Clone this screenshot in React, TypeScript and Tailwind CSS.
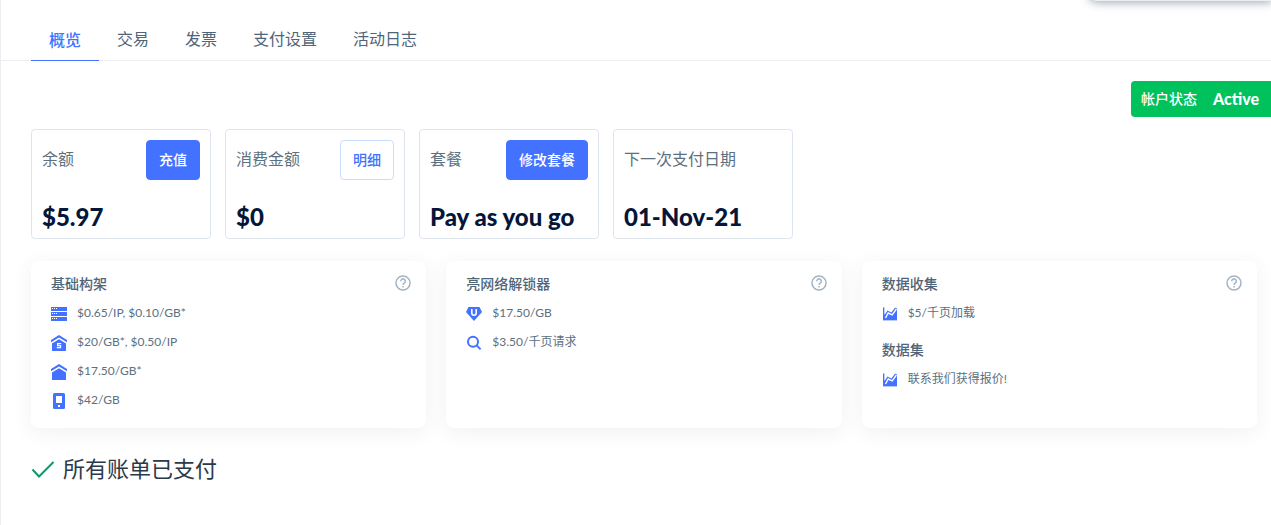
import type { ReactNode } from 'react';

const BLUE = '#4272ff';

function ServerIcon() {
  return (
    <svg viewBox="0 0 16 16" className="size-4 shrink-0" fill={BLUE} aria-hidden="true">
      {[1, 6, 11].map((y) => (
        <g key={y}>
          <rect x="0" y={y} width="16" height="4" />
          <path d={`M1 ${y + 1}h1v1h-1zM3 ${y + 1}h1v1h-1zM5 ${y + 1}h1v1h-1z`} fill="#fff" />
        </g>
      ))}
    </svg>
  );
}

function HouseIcon({ marked = false }: { marked?: boolean }) {
  return (
    <svg viewBox="0 0 16 16" className="size-4 shrink-0" fill={BLUE} aria-hidden="true">
      <path d="M8 0 16 5V7.2L8 2.4 0 7.2V5Z" />
      <path d="M8 4.2 15 8.5V16H1V8.5Z" />
      {marked && <path d="M10.2 8.6H6.6V10.7H9.6V12.6H5.8" fill="none" stroke="#fff" strokeWidth="1.2" />}
    </svg>
  );
}

function PhoneIcon() {
  return (
    <svg viewBox="0 0 16 16" className="size-4 shrink-0" aria-hidden="true">
      <rect x="2" y="0" width="12" height="16" rx="1.5" fill={BLUE} />
      <path d="M5 3h6v7H5zM7 12h2v2H7z" fill="#fff" />
    </svg>
  );
}

function UnlockerIcon() {
  return (
    <svg viewBox="0 0 16 16" className="size-4 shrink-0" aria-hidden="true">
      <path d="M2.5 1h11L16 6 8 15 0 6Z" fill={BLUE} />
      <path d="M5.8 3v4a2.2 2.2 0 0 0 4.4 0V3" fill="none" stroke="#fff" strokeWidth="1.6" />
    </svg>
  );
}

function SearchIcon() {
  return (
    <svg viewBox="0 0 16 16" className="size-4 shrink-0" fill="none" stroke={BLUE} strokeWidth="2" aria-hidden="true">
      <circle cx="7" cy="6.8" r="5" />
      <path d="m10.6 10.4 4 4" />
    </svg>
  );
}

function ChartIcon() {
  return (
    <svg viewBox="0 0 16 16" className="size-4 shrink-0" aria-hidden="true">
      <path d="M1 1.5h1.6V9L5.4 4.4l4 2L13 1.500 15 2.500V14H1Z" fill={BLUE} />
      <path d="M2.600 1.500H13L9.400 5.400 5.600 3.500 2.600 8Z" fill="#fff" />
      <path d="M3.500 12 6.200 7l4 1.900 4.200-5.900" fill="none" stroke="#fff" strokeWidth="1.400" />
      <path d="M1 14h14v1H1Z" fill="#b8caff" />
    </svg>
  );
}

function HelpIcon() {
  return (
    <svg viewBox="0 0 16 16" className="size-4" fill="none" stroke="#a3b4c4" strokeWidth="1.5" aria-hidden="true">
      <circle cx="8" cy="8" r="7" />
      <path d="M5.7 6.3a2.3 2.3 0 1 1 3.6 1.8C8.5 8.6 8 8.9 8 10" />
      <path d="M8 11v1.5" />
    </svg>
  );
}

const tabs = ['概览', '交易', '发票', '支付设置', '活动日志'];

function Tabs() {
  return (
    <nav className="flex h-[61px] border-b border-[#ebedf0] pl-[30px]">
      {tabs.map((tab, i) => (
        <a
          key={tab}
          href="#"
          aria-current={i === 0 ? 'page' : undefined}
          className={
            i === 0
              ? '-mb-px flex items-end border-b border-[#4272ff] px-[18px] pb-2 text-base font-medium text-[#4272ff]'
              : '-mb-px flex items-end border-b border-transparent px-[18px] pb-[9px] text-base text-[#506578]'
          }
        >
          {tab}
        </a>
      ))}
    </nav>
  );
}

type Stat = { label: string; value: string; action?: string; outlined?: boolean };

const stats: Stat[] = [
  { label: '余额', value: '$5.97', action: '充值' },
  { label: '消费金额', value: '$0', action: '明细', outlined: true },
  { label: '套餐', value: 'Pay as you go', action: '修改套餐' },
  { label: '下一次支付日期', value: '01-Nov-21' },
];

function StatCard({ label, value, action, outlined }: Stat) {
  return (
    <section className="w-[180px] rounded border border-[#dfe5ed] p-[10px] pb-1">
      <div className="flex h-10 items-center justify-between">
        <h2 className="pb-[2px] text-base text-[#5c7080]">{label}</h2>
        {action && (
          <button
            type="button"
            className={
              outlined
                ? 'h-10 rounded border border-[#cbdcff] px-3 text-sm font-medium text-[#4272ff]'
                : 'h-10 rounded border border-[#4272ff] bg-[#4272ff] px-3 text-sm font-medium text-white'
            }
          >
            {action}
          </button>
        )}
      </div>
      <p className="mt-5 text-2xl leading-[34px] font-black whitespace-nowrap text-[#04163a]">{value}</p>
    </section>
  );
}

type Group = { title: string; rows: { icon: ReactNode; text: string }[] };

const panels: Group[][] = [
  [
    {
      title: '基础构架',
      rows: [
        { icon: <ServerIcon />, text: '$0.65/IP, $0.10/GB*' },
        { icon: <HouseIcon marked />, text: '$20/GB*, $0.50/IP' },
        { icon: <HouseIcon />, text: '$17.50/GB*' },
        { icon: <PhoneIcon />, text: '$42/GB' },
      ],
    },
  ],
  [
    {
      title: '亮网络解锁器',
      rows: [
        { icon: <UnlockerIcon />, text: '$17.50/GB' },
        { icon: <SearchIcon />, text: '$3.50/千页请求' },
      ],
    },
  ],
  [
    { title: '数据收集', rows: [{ icon: <ChartIcon />, text: '$5/千页加载' }] },
    { title: '数据集', rows: [{ icon: <ChartIcon />, text: '联系我们获得报价!' }] },
  ],
];

function PricePanel({ groups }: { groups: Group[] }) {
  return (
    <section className="flex items-start justify-between rounded-lg bg-white px-5 pt-3 pb-[13px] shadow-[0_4px_20px_rgba(60,80,90,0.08)]">
      <div className="flex flex-col gap-[11px]">
        {groups.map((group) => (
          <div key={group.title}>
            <h3 className="mb-1 text-sm leading-[22px] font-medium text-[#506578]">{group.title}</h3>
            <ul>
              {group.rows.map((row) => (
                <li key={row.text} className="flex h-[29px] items-center gap-[10px] text-xs text-[#5c7080]">
                  {row.icon}
                  <span className="pb-[2px]">{row.text}</span>
                </li>
              ))}
            </ul>
          </div>
        ))}
      </div>
      <button type="button" aria-label="帮助" className="-mr-[5px] mt-[2px]">
        <HelpIcon />
      </button>
    </section>
  );
}

export default function App() {
  return (
    <div className="relative min-h-screen overflow-hidden border-l border-[#ebedf0] bg-white font-[Lato,'Noto_Sans_CJK_SC',sans-serif]">
      <div className="absolute -top-4 right-0 h-[17px] w-[182px] rounded-bl-lg bg-[#eceff1] shadow-[0_1px_8px_1px_rgba(60,85,105,0.45)]" />
      <Tabs />
      <main className="pt-5 pb-6">
        <div className="flex justify-end">
          <div className="flex h-9 items-center gap-4 rounded-l bg-[#00c25c] pr-3 pl-[10px] text-white">
            <span className="text-sm font-medium">帐户状态</span>
            <span className="text-base font-black">Active</span>
          </div>
        </div>
        <div className="mt-3 flex flex-wrap gap-[14px] pl-[30px]">
          {stats.map((stat) => (
            <StatCard key={stat.label} {...stat} />
          ))}
        </div>
        <div className="mt-[22px] grid grid-cols-3 gap-5 pr-[14px] pl-[30px]">
          {panels.map((groups) => (
            <PricePanel key={groups[0].title} groups={groups} />
          ))}
        </div>
        <div className="mt-[23px] flex items-center gap-2 pl-[30px]">
          <svg viewBox="0 0 24 24" className="size-6" fill="none" stroke="#0b9a6b" strokeWidth="2" aria-hidden="true">
            <path d="m1.5 12.5 6.5 7L22.5 5" />
          </svg>
          <h2 className="text-[22px] leading-9 text-[#2b3a48]">所有账单已支付</h2>
        </div>
      </main>
    </div>
  );
}
